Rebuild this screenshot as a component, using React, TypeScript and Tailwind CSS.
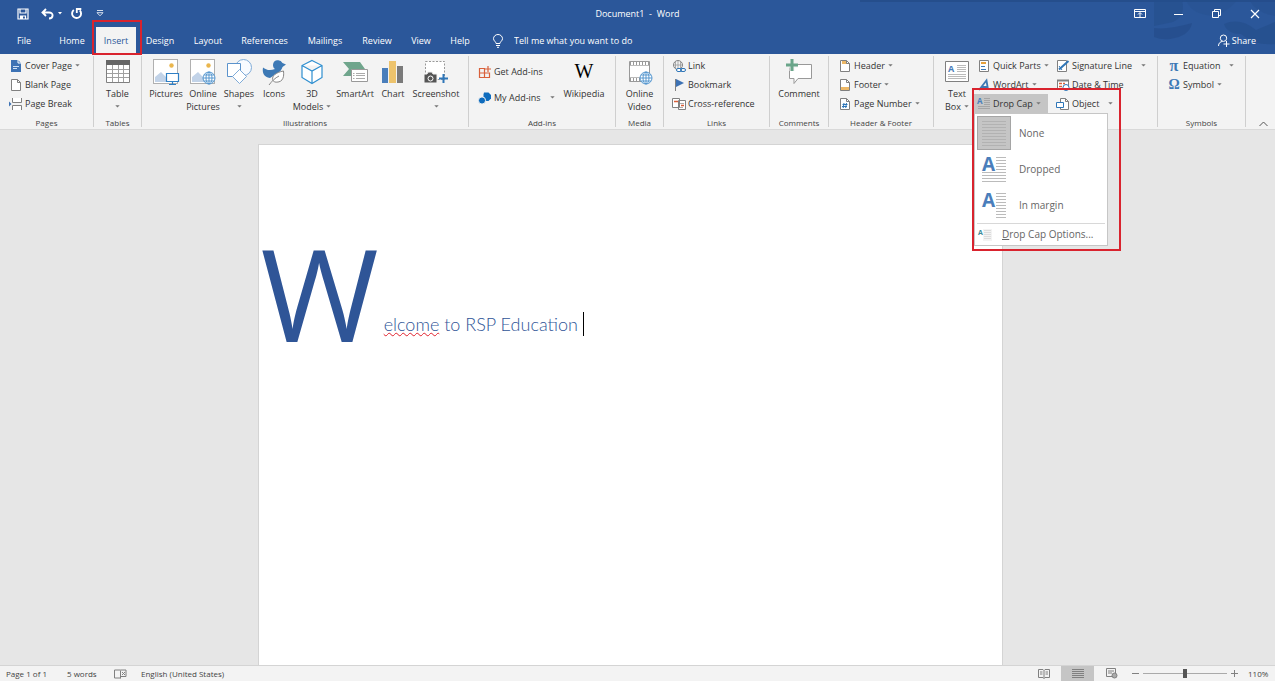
import type { ReactNode } from "react";

const tabs = [
  { name: "File", width: "w-[48px]" },
  { name: "Home", width: "w-[48px]" },
  { name: "Insert", width: "w-[40px]" },
  { name: "Design", width: "w-[48px]" },
  { name: "Layout", width: "w-[48px]" },
  { name: "References", width: "w-[65px]" },
  { name: "Mailings", width: "w-[56px]" },
  { name: "Review", width: "w-[48px]" },
  { name: "View", width: "w-[40px]" },
  { name: "Help", width: "w-[38px]" },
];

function Caret({ className = "" }: { className?: string }) {
  return (
    <svg className={`h-[3px] w-[5px] shrink-0 ${className}`} viewBox="0 0 5 3" fill="#777" aria-hidden="true">
      <path d="M.3.3h4.400L2.500 2.600z" />
    </svg>
  );
}

function Icon({ className = "h-[14px] w-[14px]", box = "0 0 14 14", children }: { className?: string; box?: string; children: ReactNode }) {
  return (
    <svg className={`shrink-0 overflow-visible ${className}`} viewBox={box} fill="none" stroke="#808080" strokeWidth="1" aria-hidden="true">
      {children}
    </svg>
  );
}

function Group({ label, width, children }: { label?: string; width: string; children: ReactNode }) {
  return (
    <section className={`flex h-[71px] shrink-0 flex-col border-r border-[#cfcfcf] ${width}`}>
      <div className="flex h-[61px] shrink-0">{children}</div>
      {label && <h2 className="text-center text-[8px] leading-[12px] text-[#444]">{label}</h2>}
    </section>
  );
}

function LargeButton({ icon, lines, caret, width }: { icon: ReactNode; lines: string[]; caret?: boolean; width: string }) {
  return (
    <button className={`flex shrink-0 flex-col items-center text-[9px] leading-[13px] ${width}`}>
      <span className="flex h-[31px] items-center justify-center">{icon}</span>
      <span>{lines[0]}</span>
      {lines[1] ? (
        <span className="flex items-center gap-[3px] whitespace-nowrap">
          {lines[1]}
          {caret && <Caret />}
        </span>
      ) : (
        caret && <Caret className="mt-[5px]" />
      )}
    </button>
  );
}

function SmallButton({ icon, label, caret, far }: { icon: ReactNode; label: string; caret?: boolean; far?: boolean }) {
  return (
    <button className="flex h-[19px] items-center gap-[2px] text-[9px] whitespace-nowrap">
      {icon}
      <span>{label}</span>
      {caret && <Caret className={far ? "ml-[7px]" : "ml-px"} />}
    </button>
  );
}

function PictureBase() {
  return (
    <>
      <rect x="1.5" y="1.5" width="24" height="24" fill="#fff" stroke="#b0b0b0" />
      <path d="M3 24v-5l6-5 5 5 3-2v7z" fill="#c2d3e8" stroke="none" />
      <circle cx="19.5" cy="7.5" r="2.2" fill="#eab64d" stroke="none" />
    </>
  );
}

function Globe({ x, y, r }: { x: number; y: number; r: number }) {
  return (
    <g stroke="#4a90cc" strokeWidth=".9">
      <circle cx={x} cy={y} r={r} fill="#fff" />
      <ellipse cx={x} cy={y} rx={r / 2} ry={r} />
      <path d={`M${x - r} ${y}h${r * 2}M${x - r + 1} ${y - r / 2}h${r * 2 - 2}M${x - r + 1} ${y + r / 2}h${r * 2 - 2}M${x} ${y - r}v${r * 2}`} />
    </g>
  );
}

function Sheet({ children }: { children?: ReactNode }) {
  return (
    <Icon>
      <path d="M2.500 1.500h6l3 3v8h-9z" fill="#fff" />
      {children}
      <path d="M8.500 1.500v3h3" />
    </Icon>
  );
}

function TextLines({ x1, x2, ys, color = "#bbb" }: { x1: number; x2: number; ys: number[]; color?: string }) {
  return <path d={ys.map((y) => `M${x1} ${y}.5H${x2}`).join("")} stroke={color} />;
}

function LetterA({ x, y, size, color = "#4a7ebb" }: { x: number; y: number; size: number; color?: string }) {
  return (
    <text x={x} y={y} fontFamily="Open Sans" fontWeight="700" fontSize={size} fill={color} stroke="none">
      A
    </text>
  );
}

function TitleBar() {
  return (
    <div className="grid h-[27px] grid-cols-3 items-center">
      <div className="flex items-center pl-[17px]">
        <button aria-label="Save">
          <Icon className="h-[12px] w-[12px]" box="0 0 12 12">
            <path d="M1 1h10v10H1zM3 1v4h6V1M3.500 11V8h5v3" stroke="#fff" strokeWidth="1.200" />
            <path d="M4 8h2v3H4z" fill="#fff" stroke="none" />
          </Icon>
        </button>
        <button aria-label="Undo" className="ml-[12px] flex items-center gap-[4px]">
          <Icon className="h-[12px] w-[13px]" box="0 0 13 12">
            <path d="M5 1L1.500 4.500 5 8M2 4.500h6c5 0 4.500 6 0 6" stroke="#fff" strokeWidth="1.900" />
          </Icon>
          <svg className="h-[3px] w-[4px]" viewBox="0 0 4 3" fill="#fff" aria-hidden="true">
            <path d="M0 0h4L2 2.500z" />
          </svg>
        </button>
        <button aria-label="Repeat" className="ml-[8px]">
          <Icon className="h-[13px] w-[13px]" box="0 0 13 13">
            <path d="M3.800 3A4.500 4.500 0 1 0 9.800 3.400" stroke="#fff" strokeWidth="1.900" />
            <path d="M6.800 6V2h4.500" stroke="#fff" strokeWidth="1.800" />
          </Icon>
        </button>
        <button aria-label="Customize Quick Access Toolbar" className="ml-[13px]">
          <Icon className="h-[7px] w-[8px]" box="0 0 8 7">
            <path d="M1 .5h6M1 2.700h6L4 5.800z" stroke="#fff" strokeWidth=".8" />
          </Icon>
        </button>
      </div>
      <h1 className="text-center text-[9px] whitespace-pre">{"Document1  -  Word"}</h1>
      <div className="flex items-center justify-end gap-[28px] pr-[15px]">
        <button aria-label="Ribbon Display Options">
          <Icon className="h-[9px] w-[12px]" box="0 0 12 9">
            <path d="M.5.5h11v8H.5zM.5 2.500h11M6 8V4M4 5.500l2-2 2 2" stroke="#fff" />
          </Icon>
        </button>
        <button aria-label="Minimize">
          <Icon className="h-[10px] w-[10px]" box="0 0 10 10">
            <path d="M0 5.500h9" stroke="#fff" />
          </Icon>
        </button>
        <button aria-label="Restore">
          <Icon className="h-[10px] w-[10px]" box="0 0 10 10">
            <path d="M.5 2.500h6v6h-6zM2.500 2.500v-2h6v6h-2" stroke="#fff" />
          </Icon>
        </button>
        <button aria-label="Close">
          <Icon className="h-[10px] w-[10px]" box="0 0 10 10">
            <path d="M1 1l8 8M9 1L1 9" stroke="#fff" strokeWidth="1.200" />
          </Icon>
        </button>
      </div>
    </div>
  );
}

function TabRow() {
  return (
    <div className="flex h-[27px] items-center pr-[19px] text-[9px]">
      <nav className="flex h-full">
        {tabs.map((tab) =>
          tab.name === "Insert" ? (
            <button key={tab.name} className={`relative h-full bg-[#f3f3f3] text-[#2b579a] ${tab.width}`}>
              {tab.name}
              <span className="absolute -top-[7px] -left-[4px] h-[35px] w-[50px] border-2 border-[#d9232e]" />
            </button>
          ) : (
            <button key={tab.name} className={`h-full text-center ${tab.width}`}>
              {tab.name}
            </button>
          ),
        )}
      </nav>
      <label className="ml-[13px] flex flex-1 items-center gap-[10px]">
        <Icon className="h-[14px] w-[12px]" box="0 0 12 14">
          <path d="M4 9.500C4 7.500 1.500 7 1.500 4.700a4.500 4.200 0 0 1 9 0C10.500 7 8 7.500 8 9.500zM4 11.500h4M5 13.300h2" stroke="#fff" />
        </Icon>
        <input
          aria-label="Tell me what you want to do"
          placeholder="Tell me what you want to do"
          className="w-[140px] bg-transparent text-[9px] outline-none placeholder:text-white"
        />
      </label>
      <button className="flex items-center gap-[2px]">
        <Icon className="h-[13px] w-[12px]" box="0 0 12 13">
          <path d="M.5 12c0-3 2-4.500 4-4.500M5.500 1a3.200 3.200 0 1 1 0 6.400 3.200 3.200 0 0 1 0-6.400zM8 7l1 1M5.500 10h6M8.500 7v6" stroke="#fff" />
        </Icon>
        Share
      </button>
    </div>
  );
}

function DropCapMenu() {
  return (
    <div role="menu" className="absolute top-[19px] left-0 z-10 w-[134px] border border-[#c6c6c6] bg-white px-[2px] pt-px text-[10px] text-[#666]">
      <button role="menuitem" className="flex h-[36px] w-full items-center gap-[8px]">
        <span className="flex h-[34px] w-[34px] items-center justify-center border border-[#a5a5a5] bg-[#c5c5c5]">
          <Icon className="h-[26px] w-[26px]" box="0 0 26 26">
            <TextLines x1={1} x2={25} ys={[1, 4, 7, 10, 13, 16, 19, 22, 25]} color="#b2b2b2" />
          </Icon>
        </span>
        None
      </button>
      <button role="menuitem" className="flex h-[36px] w-full items-center gap-[8px]">
        <span className="flex w-[34px] justify-center">
          <Icon className="h-[26px] w-[26px]" box="0 0 26 26">
            <LetterA x={1} y={15} size={19} />
            <TextLines x1={15} x2={25} ys={[1, 4, 7, 10, 13]} />
            <TextLines x1={1} x2={25} ys={[16, 19, 22, 25]} />
          </Icon>
        </span>
        Dropped
      </button>
      <button role="menuitem" className="flex h-[36px] w-full items-center gap-[8px]">
        <span className="flex w-[34px] justify-center">
          <Icon className="h-[26px] w-[26px]" box="0 0 26 26">
            <LetterA x={1} y={15} size={19} />
            <TextLines x1={15} x2={25} ys={[1, 4, 7, 10, 13, 16, 19, 22, 25]} />
          </Icon>
        </span>
        In margin
      </button>
      <button role="menuitem" className="flex h-[22px] w-full items-center gap-[10px] border-t border-[#d8d8d8] pl-px">
        <Icon>
          <rect x="5" y="1" width="9" height="12" fill="#f3f3f3" stroke="none" />
          <LetterA x={0} y={7} size={7} color="#3b8a9a" />
          <TextLines x1={6} x2={13} ys={[2, 4, 6, 8, 10]} color="#dcdcdc" />
        </Icon>
        <span>
          <u>D</u>rop Cap Options...
        </span>
      </button>
    </div>
  );
}

function Ribbon() {
  return (
    <div className="flex h-[76px] border-b border-[#d9d9d9] bg-[#f3f3f3] pt-[2px] text-[#333]">
      <Group label="Pages" width="w-[94px]">
        <div className="flex flex-col pl-[9px]">
          <SmallButton
            label="Cover Page"
            caret
            icon={
              <Icon>
                <path d="M2 1h7l3 3v9H2z" fill="#3d72b4" stroke="none" />
                <path d="M9 1v3h3" stroke="#fff" />
                <path d="M4 7.500h6M4 9.500h4" stroke="#cfe0f5" />
              </Icon>
            }
          />
          <SmallButton label="Blank Page" icon={<Sheet />} />
          <SmallButton
            label="Page Break"
            icon={
              <Icon>
                <path d="M3.500 1v4.500h9V1M3.500 13V8.500h9V13" fill="#fff" />
                <path d="M0 4.500l2.500 2.500L0 9.500z" fill="#3d72b4" stroke="none" />
              </Icon>
            }
          />
        </div>
      </Group>

      <Group label="Tables" width="w-[48px]">
        <LargeButton
          width="w-full"
          lines={["Table"]}
          caret
          icon={
            <Icon className="h-[23px] w-[24px]" box="0 0 24 23">
              <path d="M.5.5h23v22H.5z" fill="#fff" />
              <path d="M0 0h24v5H0z" fill="#666" stroke="none" />
              <path d="M1 9.500h22M1 13.500h22M1 17.500h22M6.500 5v17M12.500 5v17M17.500 5v17" stroke="#a0a0a0" />
            </Icon>
          }
        />
      </Group>

      <Group label="Illustrations" width="w-[327px]">
        <div className="flex pl-[5px]">
          <LargeButton
            width="w-[38px]"
            lines={["Pictures"]}
            icon={
              <Icon className="h-[28px] w-[28px]" box="0 0 28 28">
                <PictureBase />
                <path d="M14.500 15.500h12v8h-12zM20.500 24v2M17 26.500h7" fill="#fff" stroke="#2f7fc4" strokeWidth="1.200" />
              </Icon>
            }
          />
          <LargeButton
            width="w-[36px]"
            lines={["Online", "Pictures"]}
            icon={
              <Icon className="h-[28px] w-[28px]" box="0 0 28 28">
                <PictureBase />
                <Globe x={20} y={20} r={6} />
              </Icon>
            }
          />
          <LargeButton
            width="w-[36px]"
            lines={["Shapes"]}
            caret
            icon={
              <Icon className="h-[26px] w-[26px]" box="0 0 26 26">
                <circle cx="17.500" cy="8.500" r="8" fill="#f8fbff" stroke="#7fabd8" />
                <path d="M1.500 4.500h13v13h-13z" fill="#fff" stroke="#5b93cc" />
                <path d="M13.500 10.500l7 7-7 7-7-7z" fill="#fff" stroke="#7fabd8" />
              </Icon>
            }
          />
          <LargeButton
            width="w-[34px]"
            lines={["Icons"]}
            icon={
              <Icon className="h-[26px] w-[24px]" box="0 0 24 26">
                <path d="M11 6a5 5 0 0 1 9.500-2L24 5.500 20.500 8c-.5 2-1.500 2.500-2 4L8 19C2 18 0 14 1 8.500c3 2.500 7 3.500 12 1.500-1.500-1-2-2.500-2-4z" fill="#3d79b5" stroke="none" />
                <path d="M21.500 12c1 8-2 12-9 11-4-3-2-9 9-11zM7 26c3-4 6-7 10-9" fill="#fff" stroke="#888" />
              </Icon>
            }
          />
          <LargeButton
            width="w-[42px]"
            lines={["3D", "Models"]}
            caret
            icon={
              <Icon className="h-[26px] w-[22px]" box="0 0 22 26">
                <path d="M11 1.500l10 5v12l-10 6-10-6v-12zM1 6.500l10 5.500 10-5.500M11 12v12.500" fill="#fff" stroke="#2f8fd0" strokeWidth="1.200" />
              </Icon>
            }
          />
          <LargeButton
            width="w-[44px]"
            lines={["SmartArt"]}
            icon={
              <Icon className="h-[22px] w-[26px]" box="0 0 26 22">
                <path d="M1 1h17l5 7-5 7H1l6-7z" fill="#6fa58c" stroke="none" />
                <path d="M9.500 8.500h16v12h-16z" fill="#fff" stroke="#999" />
                <path d="M14 12.500h9M14 14.500h9M14 17.500h9M11 12.500h1.500M11 14.500h1.500M11 17.500h1.500" stroke="#aaa" />
              </Icon>
            }
          />
          <LargeButton
            width="w-[32px]"
            lines={["Chart"]}
            icon={
              <Icon className="h-[24px] w-[22px]" box="0 0 22 24">
                <path d="M0 8h6v15H0z" fill="#4a7ebb" stroke="none" />
                <path d="M7 1h7v22H7z" fill="#edc36c" stroke="none" />
                <path d="M15 6h6v17h-6z" fill="#7a7a7a" stroke="none" />
              </Icon>
            }
          />
          <LargeButton
            width="w-[54px]"
            lines={["Screenshot"]}
            caret
            icon={
              <Icon className="h-[24px] w-[24px]" box="0 0 24 24">
                <path d="M1.500 1.500h19v18h-19z" fill="#fff" stroke="#999" strokeDasharray="2 1.500" />
                <path d="M0 14h3l1-2h4l1 2h4v9H0z" fill="#555" stroke="#f3f3f3" />
                <circle cx="6.500" cy="18.500" r="2.500" stroke="#fff" />
                <path d="M19.500 14v9M15 18.500h9" stroke="#2f76b8" strokeWidth="2" />
              </Icon>
            }
          />
        </div>
      </Group>

      <Group label="Add-ins" width="w-[147px]">
        <div className="flex w-[90px] flex-col gap-[7px] pt-[6px] pl-[9px]">
          <SmallButton
            label="Get Add-ins"
            icon={
              <Icon>
                <path d="M1.500 3.500h5v9h-5zM6.500 8h5v4.500h-5M1.500 8h5M10 1v6M7 4h6" stroke="#d9603b" strokeWidth="1.200" />
              </Icon>
            }
          />
          <SmallButton
            label="My Add-ins"
            caret
            far
            icon={
              <Icon>
                <path d="M6 1.500h4.500L13 4v3.500L10.500 10H8L5.500 7.500v-4z" fill="#0f6cbd" stroke="none" />
                <circle cx="4" cy="9.500" r="3.600" fill="#0f6cbd" stroke="#f3f3f3" />
              </Icon>
            }
          />
        </div>
        <LargeButton width="w-[50px]" lines={["Wikipedia"]} icon={<span className="font-['Liberation_Serif'] text-[20px] text-black">W</span>} />
      </Group>

      <Group label="Media" width="w-[48px]">
        <LargeButton
          width="w-full"
          lines={["Online", "Video"]}
          icon={
            <Icon className="h-[26px] w-[26px]" box="0 0 26 26">
              <path d="M2.500 2.500h20v20h-20z" fill="#fff" stroke="#999" />
              <path d="M3 4.500h19M3 20.500h19" stroke="#999" strokeWidth="3" strokeDasharray="1 2" />
              <path d="M3 6.500h19M3 18.500h19" stroke="#bbb" />
              <Globe x={19} y={19} r={6} />
            </Icon>
          }
        />
      </Group>

      <Group label="Links" width="w-[106px]">
        <div className="flex flex-col pl-[8px]">
          <SmallButton
            label="Link"
            icon={
              <Icon>
                <circle cx="6" cy="6" r="4.500" />
                <path d="M1.500 6h9M6 1.500v9M3.500 2.500v7M8.500 2.500v7" stroke="#999" strokeWidth=".8" />
                <rect x="4.500" y="9.500" width="5" height="3" rx="1.500" fill="#fff" stroke="#2f76b8" />
                <rect x="8.500" y="9.500" width="5" height="3" rx="1.500" stroke="#2f76b8" />
              </Icon>
            }
          />
          <SmallButton
            label="Bookmark"
            icon={
              <Icon>
                <path d="M3.500 1v12" />
                <path d="M4 1l8 4-8 4z" fill="#3d72b4" stroke="none" />
              </Icon>
            }
          />
          <SmallButton
            label="Cross-reference"
            icon={
              <Icon>
                <path d="M.5 1.500h7v9h-7zM6.500 3.500h7v9h-7z" fill="#fff" />
                <path d="M2 4.500h4M9 8.500h3" stroke="#d9603b" strokeWidth="1.500" />
                <path d="M8 6.500h4M8 10.500h3" stroke="#aaa" />
              </Icon>
            }
          />
        </div>
      </Group>

      <Group label="Comments" width="w-[59px]">
        <LargeButton
          width="w-full"
          lines={["Comment"]}
          icon={
            <Icon className="h-[26px] w-[26px]" box="0 0 26 26">
              <path d="M3.500 5.500h22v14H12l-4 5v-5H3.500z" fill="#fff" stroke="#999" />
              <path d="M6 0v12M0 6h12" stroke="#f3f3f3" strokeWidth="5" />
              <path d="M6 0v12M0 6h12" stroke="#6aa58a" strokeWidth="3" />
            </Icon>
          }
        />
      </Group>

      <Group label="Header & Footer" width="w-[105px]">
        <div className="flex flex-col pl-[9px]">
          <SmallButton label="Header" caret icon={<Sheet><path d="M4 2h5v3H4z" fill="#edb866" stroke="none" /></Sheet>} />
          <SmallButton label="Footer" caret icon={<Sheet><path d="M3 9h8v3H3z" fill="#edb866" stroke="none" /></Sheet>} />
          <SmallButton label="Page Number" caret icon={<Sheet><path d="M6 6l-.8 5M8.500 6l-.8 5M4.500 7.500h5M4 9.500h5" stroke="#2f76b8" /></Sheet>} />
        </div>
      </Group>

      <Group width="w-[224px]">
        <LargeButton
          width="w-[40px] pl-[6px]"
          lines={["Text", "Box"]}
          caret
          icon={
            <Icon className="h-[21px] w-[24px]" box="0 0 24 21">
              <path d="M.5.5h23v20H.5z" fill="#fff" />
              <LetterA x={3} y={11} size={9} />
              <TextLines x1={12} x2={21} ys={[4, 6, 8, 10]} />
              <TextLines x1={3} x2={21} ys={[13, 15, 17]} />
            </Icon>
          }
        />
        <div className="flex w-[82px] flex-col">
          <div className="pl-[3px]">
            <SmallButton
              label="Quick Parts"
              caret
              icon={
                <Icon>
                  <path d="M2.500 1.500h9v11h-9z" fill="#fff" />
                  <path d="M4 4h5" stroke="#e9a23b" strokeWidth="2" />
                  <path d="M4 7.500h4M4 10.500h5" stroke="#3d79b5" />
                </Icon>
              }
            />
            <SmallButton
              label="WordArt"
              caret
              icon={
                <Icon>
                  <path d="M2 12L9.500 2.500 11 11.500M4.500 9h6" stroke="#3d79b5" strokeWidth="1.800" />
                </Icon>
              }
            />
          </div>
          <div className="relative">
            <button aria-expanded="true" className="flex h-[19px] w-[74px] items-center gap-[2px] bg-[#c5c5c5] pl-[3px] text-[9px]">
              <Icon>
                <LetterA x={0} y={7} size={8} />
                <TextLines x1={7} x2={13} ys={[1, 3, 5, 7]} color="#a5a5a5" />
                <TextLines x1={1} x2={13} ys={[9, 11]} color="#a5a5a5" />
              </Icon>
              Drop Cap
              <Caret className="ml-px" />
            </button>
            <DropCapMenu />
            <span className="pointer-events-none absolute -top-[6px] -left-[2px] z-20 h-[163px] w-[149px] border-2 border-[#d9232e]" />
          </div>
        </div>
        <div className="flex w-[100px] flex-col">
          <SmallButton
            label="Signature Line"
            caret
            far
            icon={
              <Icon>
                <path d="M1.500 1.500h9v11h-9z" fill="#fff" />
                <path d="M3 10.500L12.500 2" stroke="#2f76b8" strokeWidth="2" />
                <path d="M3 7l3 4" stroke="#2f76b8" />
              </Icon>
            }
          />
          <SmallButton
            label="Date & Time"
            icon={
              <Icon>
                <path d="M1.500 2.500h11v9h-11z" fill="#fff" />
                <path d="M1 2.500h12" strokeWidth="2" />
                <path d="M3 5.500h3M7 5.500h2M3 8.500h3" stroke="#d9603b" strokeWidth="1.500" />
                <circle cx="10" cy="9.500" r="3" fill="#fff" stroke="#2f76b8" />
              </Icon>
            }
          />
          <SmallButton
            label="Object"
            caret
            far
            icon={
              <Icon>
                <path d="M4.500 1.500h5l3 3v8h-8z" fill="#fff" />
                <path d="M9.500 1.500v3h3" />
                <path d="M.5 5.500h7v5h-7z" fill="#fff" stroke="#2f76b8" />
              </Icon>
            }
          />
        </div>
      </Group>

      <Group label="Symbols" width="w-[88px]">
        <div className="flex flex-col pl-[9px]">
          <SmallButton label="Equation" caret far icon={<span className="w-[14px] text-center font-['Liberation_Serif'] text-[16px] leading-none font-bold text-[#3d79b5]">π</span>} />
          <SmallButton label="Symbol" caret icon={<span className="w-[14px] text-center font-['Liberation_Serif'] text-[14px] leading-none font-bold text-[#3d79b5]">Ω</span>} />
        </div>
      </Group>

      <div className="flex flex-1 items-end justify-end pr-[7px] pb-[2px]">
        <button aria-label="Collapse the Ribbon">
          <Icon className="h-[6px] w-[9px]" box="0 0 9 6">
            <path d="M.5 5l4-4 4 4" stroke="#555" />
          </Icon>
        </button>
      </div>
    </div>
  );
}

function StatusBar() {
  return (
    <footer className="flex h-[16px] items-center border-t border-[#d4d4d4] bg-[#f3f3f3] pr-[7px] pl-[6px] text-[8px] text-[#444]">
      <span className="w-[61px]">Page 1 of 1</span>
      <span className="w-[47px]">5 words</span>
      <button aria-label="Proofing errors" className="w-[27px]">
        <Icon className="h-[10px] w-[13px]" box="0 0 13 10">
          <path d="M6.500 1.500V9.500M6.500 1h-6v8h6M6.500 1h5.500v6.500H6.500M8 3l3 3M11 3L8 6" />
        </Icon>
      </button>
      <span>English (United States)</span>
      <div className="ml-auto flex h-full items-center">
        <button aria-label="Read Mode" className="flex w-[34px] justify-center">
          <Icon className="h-[10px] w-[12px]" box="0 0 12 10">
            <path d="M6 1.500v8M.5.5H5l1 1 1-1h4.500v8H7l-1 1-1-1H.5zM2 3h2.500M2 5h2.500M7.500 3H10M7.500 5H10" />
          </Icon>
        </button>
        <button aria-label="Print Layout" className="flex h-full w-[33px] items-center justify-center bg-[#c5c5c5]">
          <Icon className="h-[10px] w-[12px]" box="0 0 12 10">
            <path d="M0 .5h12M0 2.500h12M0 4.500h12M0 6.500h12M0 8.500h12" />
          </Icon>
        </button>
        <button aria-label="Web Layout" className="flex w-[35px] justify-center">
          <Icon className="h-[11px] w-[12px]" box="0 0 12 11">
            <path d="M8 8.500H.5v-8h9V5M2 3h6M2 5h4" />
            <circle cx="8.500" cy="7.500" r="2.500" fill="#aaa" />
          </Icon>
        </button>
        <button aria-label="Zoom Out" className="flex w-[12px] justify-center">
          <Icon className="h-[7px] w-[7px]" box="0 0 7 7">
            <path d="M0 3.500h7" />
          </Icon>
        </button>
        <input
          type="range"
          min="10"
          max="190"
          defaultValue="100"
          aria-label="Zoom"
          className="mx-[2px] h-[9px] w-[84px] appearance-none bg-[linear-gradient(#aaa,#aaa)] bg-[length:100%_1px] bg-center bg-no-repeat [&::-webkit-slider-thumb]:h-[9px] [&::-webkit-slider-thumb]:w-[4px] [&::-webkit-slider-thumb]:appearance-none [&::-webkit-slider-thumb]:bg-[#555]"
        />
        <button aria-label="Zoom In" className="flex w-[10px] justify-center">
          <Icon className="h-[7px] w-[7px]" box="0 0 7 7">
            <path d="M0 3.500h7M3.500 0v7" />
          </Icon>
        </button>
        <span className="ml-[9px] w-[20px]">110%</span>
      </div>
    </footer>
  );
}

export default function App() {
  return (
    <div className="min-h-screen bg-white pr-[5px] font-['Open_Sans','Noto_Sans',sans-serif]">
      <div className="flex min-h-screen flex-col bg-[#e6e6e6]">
        <header className="relative bg-[#2b579a] text-white">
          <svg className="absolute top-0 right-0 h-[54px] w-[415px]" viewBox="0 0 415 54" fill="#254e8c" aria-hidden="true">
            <path d="M0 0h415v2H0z" />
            <path d="M294 0h28q4 16-9 22l-19 4z" opacity=".6" />
            <path d="M294 28q14 2 38-5-2 13-22 16-9 1-16-2z" opacity=".8" />
            <path d="M326 0q4 12 20 15t32-15z" opacity=".3" />
            <path d="M364 24q16-7 32 6l19-8v22q-20 2-34-10-14 0-17-10z" opacity=".7" />
            <path d="M390 0q4 12 25 16V0z" opacity=".4" />
          </svg>
          <div className="relative">
            <TitleBar />
            <TabRow />
          </div>
        </header>
        <Ribbon />
        <main className="flex flex-1 pt-[14px] pr-[15px]">
          <article className="mx-auto w-full max-w-[745px] border border-b-0 border-[#d4d4d4] bg-white pt-[84px] pl-[2px] text-[#2f5597]">
            <p className="flex items-end">
              <span className="text-[128px] leading-none">W</span>
              <span className="mb-[21px] flex pl-[5px] font-['Lato'] text-[18px] leading-[24px] font-light whitespace-pre">
                <span className="underline decoration-[#e0202b] decoration-wavy decoration-1 underline-offset-1">elcome</span>
                {" to RSP Education "}
                <span className="h-[24px] w-px bg-black" />
              </span>
            </p>
          </article>
        </main>
        <StatusBar />
      </div>
    </div>
  );
}
